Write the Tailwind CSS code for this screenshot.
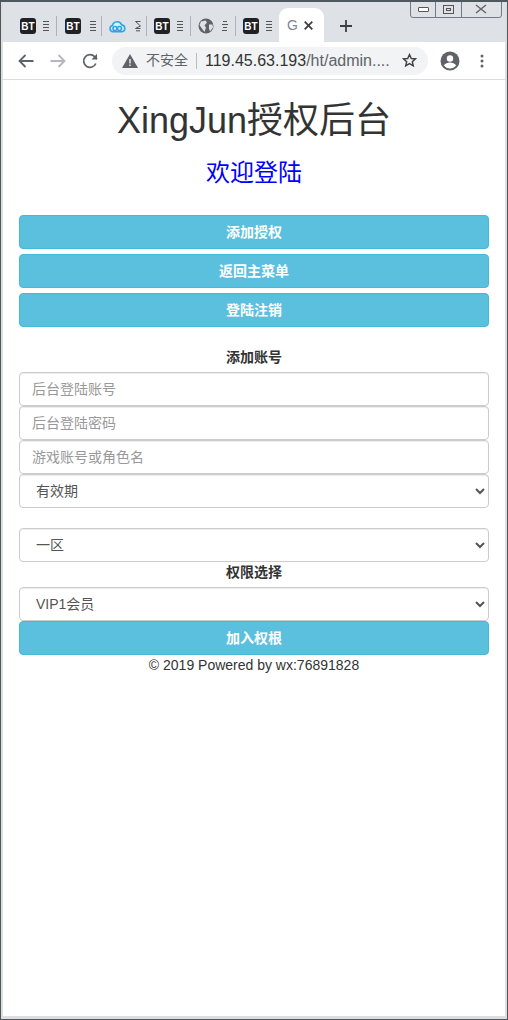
<!DOCTYPE html>
<html lang="zh-CN">
<head>
    <meta charset="UTF-8">
    <meta name="viewport" content="width=device-width, initial-scale=1.0">
    <title>XingJun授权后台</title>
    <script src="https://cdn.jsdelivr.net/npm/@tailwindcss/browser@4"></script>
</head>
<body class="bg-white font-['Liberation_Sans','Noto_Sans_CJK_SC',sans-serif] text-[#333]">
<div class="relative w-[508px] h-[1020px] overflow-hidden border border-[#50585f] border-t-2">
    <div class="flex flex-col h-full border-l-2 border-r-[2px] border-b-[3px] border-[#dedede]">

        <!-- tab strip -->
        <div class="flex items-end h-[40px] pl-[9px] bg-[#dee1e6] shrink-0">
            <div class="flex items-center w-[45px] h-[20px] mb-[6px] pl-[8px] border-r border-[#9aa0a6]/70">
                <span class="flex items-center justify-center w-4 h-4 rounded-[3px] bg-[#202124] text-white text-[10px] font-bold">BT</span>
                <svg class="ml-[7px]" width="6" height="12" viewBox="0 0 6 12" stroke="#555" stroke-width="1"><path d="M0 1.5h6M0 4.5h6M0 7.5h6M0 10.5h6"/></svg>
            </div>
            <div class="flex items-center w-[45px] h-[20px] mb-[6px] pl-[8px] border-r border-[#9aa0a6]/70">
                <span class="flex items-center justify-center w-4 h-4 rounded-[3px] bg-[#202124] text-white text-[10px] font-bold">BT</span>
                <svg class="ml-[9px]" width="6" height="12" viewBox="0 0 6 12" stroke="#555" stroke-width="1"><path d="M0 1.5h6M0 4.5h6M0 7.5h6M0 10.5h6"/></svg>
            </div>
            <div class="flex items-center w-[45px] h-[20px] mb-[6px] pl-[7px] border-r border-[#9aa0a6]/70">
                <svg width="17" height="14" viewBox="0 0 17 14" fill="#d9f0fb" stroke="#2ea3e6" stroke-width="1.6"><path d="M4 12.8a3.2 3.2 0 0 1-.5-6.3 4.8 4.8 0 0 1 9.2-.6 3.5 3.5 0 0 1 .3 6.9z"/><circle cx="6" cy="9.5" r="2" fill="none"/><circle cx="10.500" cy="9.500" r="2" fill="none"/></svg>
                <svg class="ml-[9px]" width="6" height="12" viewBox="0 0 6 12" fill="none" stroke="#555" stroke-width="1"><path d="M5.5 1.5h-5l5 4.5-5 2.5h5M1 10.8h4"/></svg>
            </div>
            <div class="flex items-center w-[44px] h-[20px] mb-[6px] pl-[7px] border-r border-[#9aa0a6]/70">
                <span class="flex items-center justify-center w-4 h-4 rounded-[3px] bg-[#202124] text-white text-[10px] font-bold">BT</span>
                <svg class="ml-[7px]" width="6" height="12" viewBox="0 0 6 12" stroke="#555" stroke-width="1"><path d="M0 1.5h6M0 4.5h6M0 7.5h6M0 10.5h6"/></svg>
            </div>
            <div class="flex items-center w-[45px] h-[20px] mb-[6px] pl-[7px] border-r border-[#9aa0a6]/70">
                <svg width="16" height="16" viewBox="0 0 16 16"><circle cx="8" cy="8" r="7.5" fill="#5f6368"/><path d="M3 3.5 7.5 2.5 9 4.5 6.5 7.5 8 9.5 6.5 14 3.500 10 1.5 7zM11 6.5h3.5l.5 3-3 4-1-3z" fill="#dee1e6"/></svg>
                <svg class="ml-[8px]" width="6" height="12" viewBox="0 0 6 12" stroke="#555" stroke-width="1"><path d="M1 1.5h4M0 4.5h6M1 7.5h4M0 10.5h5"/></svg>
            </div>
            <div class="flex items-center w-[43px] h-[20px] mb-[6px] pl-[7px]">
                <span class="flex items-center justify-center w-4 h-4 rounded-[3px] bg-[#202124] text-white text-[10px] font-bold">BT</span>
                <svg class="ml-[7px]" width="6" height="12" viewBox="0 0 6 12" stroke="#555" stroke-width="1"><path d="M0 1.5h6M0 4.5h6M0 7.5h6M0 10.5h6"/></svg>
            </div>
            <div class="flex items-center w-[45px] h-[34px] pl-[8px] rounded-t-[9px] bg-white">
                <span class="text-[14px] leading-none text-[#80868b]">G</span>
                <svg class="ml-[6px]" width="9" height="9" viewBox="0 0 9 9" stroke="#3c4043" stroke-width="1.8"><path d="M.7.7l7.600 7.600M8.300.7L.7 8.300"/></svg>
            </div>
            <svg class="ml-[16px] mb-[10px]" width="12" height="12" viewBox="0 0 12 12" stroke="#3c4043" stroke-width="1.8"><path d="M6 0v12M0 6h12"/></svg>
        </div>

        <!-- toolbar -->
        <div class="flex items-center h-[38px] pl-[15px] bg-white border-b border-[#dadce0] shrink-0">
            <svg width="16" height="14" viewBox="0 0 16 14" fill="none" stroke="#5f6368" stroke-width="1.8"><path d="M15.5 7H1.5M7.5 1l-6 6 6 6"/></svg>
            <svg class="ml-[16px]" width="16" height="14" viewBox="0 0 16 14" fill="none" stroke="#b4b7bb" stroke-width="1.8"><path d="M.5 7h14M8.500 1l6 6-6 6"/></svg>
            <svg class="ml-[16px]" width="16" height="16" viewBox="0 0 16 16" fill="none" stroke="#5f6368" stroke-width="1.8"><path d="M13.800 10.500A6.300 6.300 0 1 1 12.600 3.700L15 6"/><path d="M15 .8V6.500H9.500z" stroke-width="0" fill="#5f6368"/></svg>
            <div class="flex items-center w-[316px] h-[28px] ml-[14px] pl-[10px] rounded-full bg-[#f1f3f4]">
                <svg width="16" height="14" viewBox="0 0 16 14"><path d="M8 0l8 14H0z" fill="#5f6368"/><path d="M7.300 5h1.400v4.500H7.300zM7.300 10.500h1.400V12H7.300z" fill="#f1f3f4"/></svg>
                <span class="ml-[8px] text-[14px] text-[#5f6368] whitespace-nowrap">不安全</span>
                <span class="w-px h-[16px] ml-[8px] bg-[#b8bbbf]"></span>
                <span class="ml-[8px] w-[190px] text-[16px] text-[#333] whitespace-nowrap">119.45.63.193<span class="text-[#5f6368]">/ht/admin....</span></span>
                <svg class="ml-[7px]" width="15" height="15" viewBox="0 0 15 15" fill="none" stroke="#3c4043" stroke-width="1.400"><path d="M7.500 1.500l1.800 4 4.200.4-3.200 2.800 1 4.200-3.800-2.300-3.800 2.300 1-4.200L1.500 5.900l4.200-.4z"/></svg>
            </div>
            <svg class="ml-[12px]" width="20" height="20" viewBox="0 0 20 20"><circle cx="10" cy="10" r="9.500" fill="#5f6368"/><circle cx="10" cy="7.500" r="3.200" fill="#fff"/><path d="M3.800 14.500c1.500-2.300 4-3 6.200-3s4.700.7 6.200 3a8 8 0 0 1-12.400 0z" fill="#fff"/></svg>
            <svg class="ml-[20px]" width="4" height="14" viewBox="0 0 4 14" fill="#5f6368"><circle cx="2" cy="2" r="1.500"/><circle cx="2" cy="7" r="1.500"/><circle cx="2" cy="12" r="1.500"/></svg>
        </div>

        <!-- page -->
        <div class="flex-1 px-[16px] pt-[21px] bg-white">
            <h1 class="text-center text-[36px] leading-[40px]">XingJun授权后台</h1>
            <h2 class="mt-[19px] text-center text-[24px] leading-[26px] text-[#0000ff]">欢迎登陆</h2>

            <div class="flex flex-col gap-[5px] mt-[29px]">
                <button class="h-[34px] rounded border border-[#46b8da] bg-[#5bc0de] text-[14px] font-bold text-white">添加授权</button>
                <button class="h-[34px] rounded border border-[#46b8da] bg-[#5bc0de] text-[14px] font-bold text-white">返回主菜单</button>
                <button class="h-[34px] rounded border border-[#46b8da] bg-[#5bc0de] text-[14px] font-bold text-white">登陆注销</button>
            </div>

            <form class="flex flex-col mt-[20px]">
                <label class="h-[25px] text-center text-[14px] leading-[20px] font-bold">添加账号</label>
                <input class="h-[34px] px-3 rounded border border-[#ccc] bg-white text-[14px] shadow-[inset_0_1px_1px_rgba(0,0,0,0.075)] placeholder:text-[#999]" placeholder="后台登陆账号">
                <input class="h-[34px] px-3 rounded border border-[#ccc] bg-white text-[14px] shadow-[inset_0_1px_1px_rgba(0,0,0,0.075)] placeholder:text-[#999]" placeholder="后台登陆密码">
                <input class="h-[34px] px-3 rounded border border-[#ccc] bg-white text-[14px] shadow-[inset_0_1px_1px_rgba(0,0,0,0.075)] placeholder:text-[#999]" placeholder="游戏账号或角色名">
                <select class="h-[34px] px-3 rounded border border-[#ccc] bg-white text-[14px] text-[#555] shadow-[inset_0_1px_1px_rgba(0,0,0,0.075)]"><option>有效期</option></select>
                <select class="h-[34px] mt-[20px] px-3 rounded border border-[#ccc] bg-white text-[14px] text-[#555] shadow-[inset_0_1px_1px_rgba(0,0,0,0.075)]"><option>一区</option></select>
                <label class="h-[25px] text-center text-[14px] leading-[20px] font-bold">权限选择</label>
                <select class="h-[34px] px-3 rounded border border-[#ccc] bg-white text-[14px] text-[#555] shadow-[inset_0_1px_1px_rgba(0,0,0,0.075)]"><option>VIP1会员</option></select>
                <button type="button" class="h-[34px] rounded border border-[#46b8da] bg-[#5bc0de] text-[14px] font-bold text-white">加入权根</button>
            </form>

            <p class="text-center text-[14px] leading-[20px]">© 2019 Powered by wx:76891828</p>
        </div>
    </div>

    <!-- window buttons sit over the tab strip -->
    <div class="absolute top-[-2px] right-[5px] flex h-[18px] w-[92px] rounded-b-[3px] border border-[#6f7b86] bg-[#dee1e6]/60">
        <div class="flex flex-1 items-center justify-center border-r border-[#6f7b86]">
            <span class="w-[11px] h-[5px] rounded-[1px] border border-[#555] bg-white"></span>
        </div>
        <div class="flex flex-1 items-center justify-center border-r border-[#6f7b86]">
            <span class="w-[11px] h-[9px] border border-[#555] flex items-center justify-center"><span class="w-[5px] h-[3px] border border-[#555]"></span></span>
        </div>
        <div class="flex flex-[1.6] items-center justify-center">
            <svg width="12" height="10" viewBox="0 0 12 10" stroke="#666" stroke-width="1.500"><path d="M1 1l10 8M11 1L1 9"/></svg>
        </div>
    </div>
</div>
</body>
</html>
